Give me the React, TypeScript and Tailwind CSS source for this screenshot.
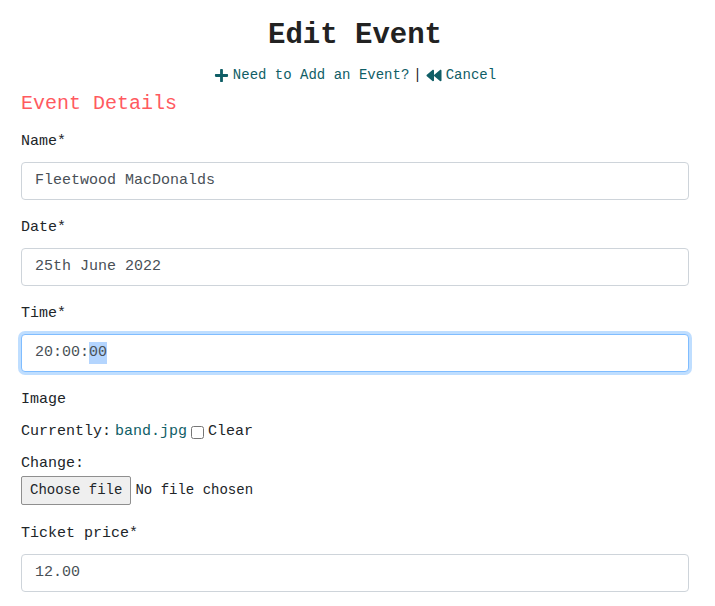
import { FaPlus, FaBackward } from 'react-icons/fa';

const font = { fontFamily: '"Liberation Mono", "DejaVu Sans Mono", monospace' };

const Field = ({ label, value }: { label: string; value: string }) => (
	<div className="mb-4">
		<div className="mb-2 text-[15px] leading-6 text-[#212529]">{label}</div>
		<div className="flex h-[38px] items-center rounded border border-[#ced4da] bg-white px-[13px] text-[15px] text-[#495057]">
			{value}
		</div>
	</div>
);

export default function App() {
	return (
		<div className="min-h-screen bg-white" style={font}>
			<div className="ml-[21px] w-[668px]">
				<h1 className="pt-[16px] text-center text-[29px] font-bold leading-[40px] text-[#222]">Edit Event</h1>
				<div className="mt-[9px] flex items-center justify-center text-[14px] leading-5 text-[#0f5e66]">
					<FaPlus className="mr-[4px] h-[15px] w-[15px]" />
					<span>Need to Add an Event?</span>
					<span className="mx-[4px] text-[#222]">|</span>
					<FaBackward className="mr-[4px] h-[15px] w-[16px]" />
					<span>Cancel</span>
				</div>
				<h2 className="mt-[6px] mb-[13px] text-[20px] leading-[26px] text-[#ff5a5f]">Event Details</h2>

				<Field label="Name*" value="Fleetwood MacDonalds" />
				<Field label="Date*" value="25th June 2022" />

				<div className="mb-4">
					<div className="mb-2 text-[15px] leading-6 text-[#212529]">Time*</div>
					<div className="flex h-[38px] items-center rounded border border-[#80bdff] bg-white px-[13px] text-[15px] text-[#495057] shadow-[0_0_0_3px_rgba(0,123,255,0.25)]">
						20:00:<span className="bg-[#b4d5fe]">00</span>
					</div>
				</div>

				<div className="mb-2 text-[15px] leading-6 text-[#212529]">Image</div>
				<div className="mb-2 flex items-center text-[15px] leading-6 text-[#212529]">
					<span>Currently:</span>
					<span className="ml-[4px] text-[#0f5e66]">band.jpg</span>
					<input type="checkbox" className="mx-[4px] h-[13px] w-[13px]" />
					<span>Clear</span>
				</div>
				<div className="text-[15px] leading-6 text-[#212529]">Change:</div>
				<div className="mb-[17px] flex items-center text-[14px] text-[#212529]">
					<span className="flex h-[29px] items-center rounded-[2px] border border-[#8f8f8f] bg-[#efefef] px-[8px]">
						Choose file
					</span>
					<span className="ml-[4px]">No file chosen</span>
				</div>

				<Field label="Ticket price*" value="12.00" />
			</div>
		</div>
	);
}
